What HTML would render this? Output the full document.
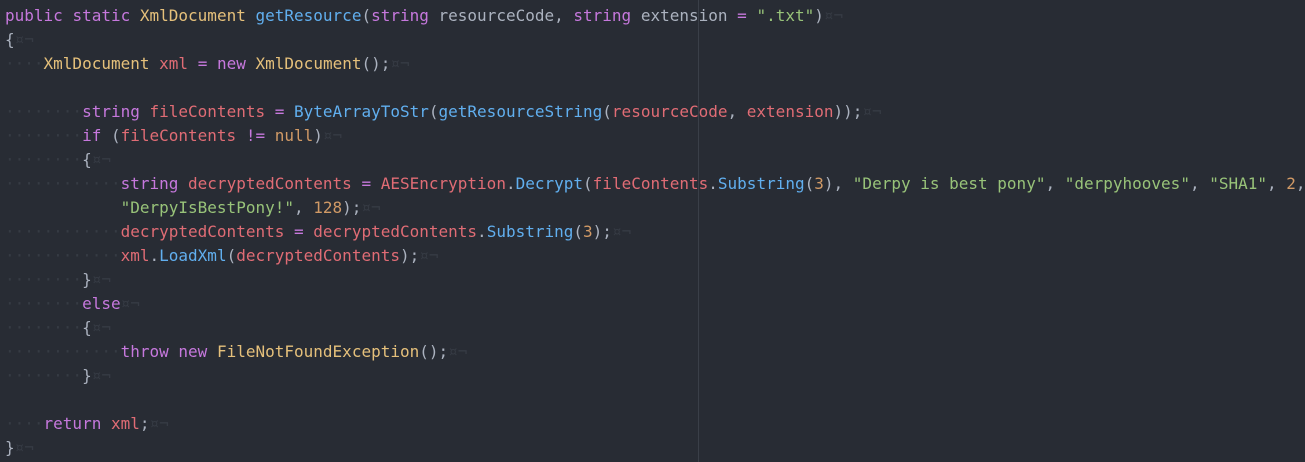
<!DOCTYPE html>
<html><head><meta charset="utf-8"><style>
html,body{margin:0;padding:0;background:#282c34;width:1305px;height:462px;overflow:hidden;position:relative}
pre{margin:0;position:absolute;left:5px;top:4px;font-family:"DejaVu Sans Mono","Liberation Mono",monospace;font-size:16px;line-height:24px;color:#abb2bf;white-space:pre}
.k{color:#c678dd}.t{color:#e5c07b}.f{color:#61afef}.v{color:#e06c75}.s{color:#98c379}.n{color:#d19a66}
.i{color:#363b44}
.g{position:absolute;left:698px;top:0;width:1px;height:462px;background:#3a3f48}
</style></head><body>
<div class="g"></div>
<pre><span class="k">public</span> <span class="k">static</span> <span class="t">XmlDocument</span> <span class="f">getResource</span>(<span class="k">string</span> resourceCode, <span class="k">string</span> extension <span class="k">=</span> <span class="s">".txt"</span>)<span class="i">¤¬</span>
{<span class="i">¤¬</span>
<span class="i">····</span><span class="t">XmlDocument</span> <span class="v">xml</span> <span class="k">=</span> <span class="k">new</span> <span class="t">XmlDocument</span>();<span class="i">¤¬</span>

<span class="i">········</span><span class="k">string</span> <span class="v">fileContents</span> <span class="k">=</span> <span class="f">ByteArrayToStr</span>(<span class="f">getResourceString</span>(<span class="v">resourceCode</span>, <span class="v">extension</span>));<span class="i">¤¬</span>
<span class="i">········</span><span class="k">if</span> (<span class="v">fileContents</span> <span class="k">!=</span> <span class="n">null</span>)<span class="i">¤¬</span>
<span class="i">········</span>{<span class="i">¤¬</span>
<span class="i">············</span><span class="k">string</span> <span class="v">decryptedContents</span> <span class="k">=</span> <span class="v">AESEncryption</span>.<span class="f">Decrypt</span>(<span class="v">fileContents</span>.<span class="f">Substring</span>(<span class="n">3</span>), <span class="s">"Derpy is best pony"</span>, <span class="s">"derpyhooves"</span>, <span class="s">"SHA1"</span>, <span class="n">2</span>,
            <span class="s">"DerpyIsBestPony!"</span>, <span class="n">128</span>);<span class="i">¤¬</span>
<span class="i">············</span><span class="v">decryptedContents</span> <span class="k">=</span> <span class="v">decryptedContents</span>.<span class="f">Substring</span>(<span class="n">3</span>);<span class="i">¤¬</span>
<span class="i">············</span><span class="v">xml</span>.<span class="f">LoadXml</span>(<span class="v">decryptedContents</span>);<span class="i">¤¬</span>
<span class="i">········</span>}<span class="i">¤¬</span>
<span class="i">········</span><span class="k">else</span><span class="i">¤¬</span>
<span class="i">········</span>{<span class="i">¤¬</span>
<span class="i">············</span><span class="k">throw</span> <span class="k">new</span> <span class="t">FileNotFoundException</span>();<span class="i">¤¬</span>
<span class="i">········</span>}<span class="i">¤¬</span>

<span class="i">····</span><span class="k">return</span> <span class="v">xml</span>;<span class="i">¤¬</span>
}<span class="i">¤¬</span></pre>
</body></html>
